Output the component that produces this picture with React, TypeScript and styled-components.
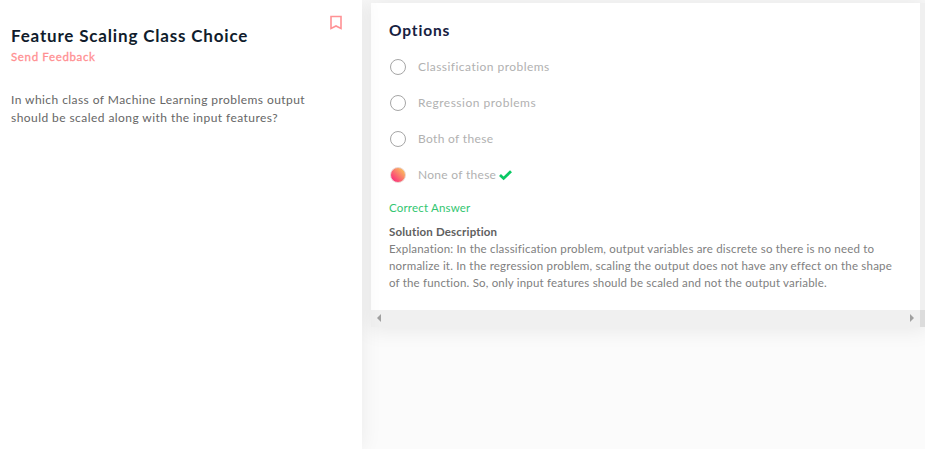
import React from "react";
import styled, { createGlobalStyle } from "styled-components";

const GlobalStyle = createGlobalStyle`
  * { box-sizing: border-box; }
  body { margin: 0; overflow: hidden; font-family: Lato, "Open Sans", sans-serif; background: #fbfbfb; }
`;

const Page = styled.main`
  display: flex;
  width: 925px;
  height: 449px;
  overflow: hidden;
`;

const ProblemPanel = styled.section`
  position: relative;
  z-index: 1;
  flex: 0 0 362px;
  display: flex;
  justify-content: space-between;
  padding: 24px 20px 0 11px;
  background: #fff;
  box-shadow: 0 0 20px rgba(0, 0, 0, 0.07);
`;

const Text = styled.span<{ $spacing: number }>`
  display: block;
  white-space: nowrap;
  letter-spacing: ${(p) => p.$spacing}px;
`;

const Title = styled.h1`
  margin: 0;
  color: #101c2c;
  font-size: 17px;
  font-weight: 700;
  line-height: 23px;
`;

const Feedback = styled.a`
  display: block;
  color: #ff8f92;
  font-size: 11.5px;
  font-weight: 400;
  -webkit-text-stroke: 0.3px #ff8f92;
  line-height: 20px;
`;

const Question = styled.p`
  margin: 24px 0 0;
  color: #666;
  font-size: 12px;
  line-height: 18px;
`;

const Bookmark = styled.svg`
  margin-top: -9px;
  flex: none;
`;

const Workspace = styled.section`
  flex: 1;
  padding: 3px 0 0 9px;
`;

const AnswerArea = styled.div`
  width: 554px;
  background: #f0f0f0;
  box-shadow: 0 0 20px 3px rgba(0, 0, 0, 0.08);
`;

const Card = styled.div`
  width: 549px;
  height: 307px;
  padding: 16px 18px 0;
  background: #fff;
`;

const OptionsTitle = styled.h2`
  margin: 0;
  color: #17213f;
  font-size: 15.5px;
  font-weight: 700;
  line-height: 22px;
`;

const OptionList = styled.div`
  padding-top: 8px;
`;

const Option = styled.label`
  display: flex;
  align-items: center;
  height: 36px;
  color: #b1b1b1;
  font-size: 12px;
  line-height: 18px;
`;

const Radio = styled.span<{ $selected: boolean }>`
  width: 16px;
  height: 16px;
  margin: 0 12px 0 1px;
  border-radius: 50%;
  border: 1px solid ${(p) => (p.$selected ? "#ecd3d0" : "#a6a6a6")};
  background: ${(p) => (p.$selected ? "linear-gradient(45deg, #fb2b7c 10%, #fac15e 90%)" : "#fff")};
`;

const Check = styled.svg`
  margin-left: 3px;
`;

const Result = styled.div`
  margin-top: 6px;
  color: #32c671;
  font-size: 11.5px;
  line-height: 17px;
`;

const SolutionTitle = styled.h3`
  margin: 7px 0 0;
  color: #606060;
  font-size: 11.5px;
  font-weight: 700;
  line-height: 17px;
`;

const Explanation = styled.p`
  margin: 0;
  color: #808080;
  font-size: 11.5px;
  line-height: 17px;
`;

const ScrollRow = styled.div`
  display: flex;
  height: 17px;
`;

const ScrollTrack = styled.div`
  display: flex;
  align-items: flex-start;
  justify-content: space-between;
  width: 549px;
  padding: 4px 6px 0;
`;

const ScrollCorner = styled.div`
  flex: 1;
  background: #dcdcdc;
`;

const options = [
  { label: "Classification problems", spacing: 0.46, selected: false },
  { label: "Regression problems", spacing: 0.5, selected: false },
  { label: "Both of these", spacing: 0.33, selected: false },
  { label: "None of these", spacing: 0.29, selected: true },
];

const explanation = [
  { text: "Explanation: In the classification problem, output variables are discrete so there is no need to", spacing: 0.2 },
  { text: "normalize it. In the regression problem, scaling the output does not have any effect on the shape", spacing: 0.2 },
  { text: "of the function. So, only input features should be scaled and not the output variable.", spacing: 0.182 },
];

export default function App() {
  return (
    <>
      <GlobalStyle />
      <Page>
        <ProblemPanel>
          <div>
            <Title><Text $spacing={0.82}>Feature Scaling Class Choice</Text></Title>
            <Feedback><Text $spacing={0.65}>Send Feedback</Text></Feedback>
            <Question>
              <Text $spacing={0.43}>In which class of Machine Learning problems output</Text>
              <Text $spacing={0.435}>should be scaled along with the input features?</Text>
            </Question>
          </div>
          <Bookmark width="12" height="15" viewBox="0 0 12 15">
            <path d="M1 1.5h10v12L6 11 1 13.5z" fill="none" stroke="#ff9295" strokeWidth="1.6" />
          </Bookmark>
        </ProblemPanel>
        <Workspace>
          <AnswerArea>
            <Card>
              <OptionsTitle><Text $spacing={0.85}>Options</Text></OptionsTitle>
              <OptionList>
                {options.map((o) => (
                  <Option key={o.label}>
                    <Radio $selected={o.selected} />
                    <Text $spacing={o.spacing}>{o.label}</Text>
                    {o.selected && (
                      <Check width="13" height="11" viewBox="0 0 13 11">
                        <path d="M1 5l3.6 3.4L12 1.2" fill="none" stroke="#0ac964" strokeWidth="2.8" />
                      </Check>
                    )}
                  </Option>
                ))}
              </OptionList>
              <Result><Text $spacing={0.19}>Correct Answer</Text></Result>
              <SolutionTitle><Text $spacing={0.18}>Solution Description</Text></SolutionTitle>
              <Explanation>
                {explanation.map((l) => <Text key={l.text} $spacing={l.spacing}>{l.text}</Text>)}
              </Explanation>
            </Card>
            <ScrollRow>
              <ScrollTrack>
                <svg width="4" height="8" viewBox="0 0 4 8"><path d="M4 0v8L0 4z" fill="#a0a0a0" /></svg>
                <svg width="4" height="8" viewBox="0 0 4 8"><path d="M0 0v8l4-4z" fill="#a0a0a0" /></svg>
              </ScrollTrack>
              <ScrollCorner />
            </ScrollRow>
          </AnswerArea>
        </Workspace>
      </Page>
    </>
  );
}
